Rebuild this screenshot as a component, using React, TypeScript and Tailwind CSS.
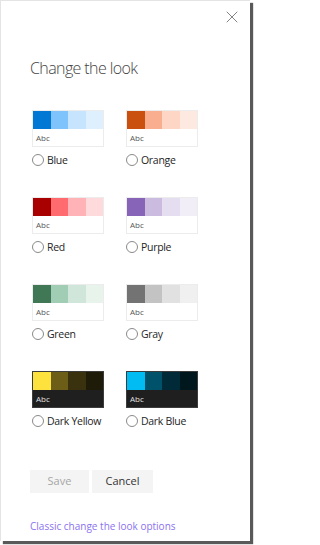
import { X } from "lucide-react";

type Theme = {
  name: string;
  colors: string[];
  dark?: boolean;
};

const themes: Theme[] = [
  { name: "Blue", colors: ["#0078d4", "#7fc3fc", "#c6e4fe", "#deeffe"] },
  { name: "Orange", colors: ["#ca5010", "#f9ae8f", "#fdd6c6", "#fee9e0"] },
  { name: "Red", colors: ["#a80000", "#ff6b6f", "#ffb3b6", "#ffdadc"] },
  { name: "Purple", colors: ["#8764b8", "#cbbbdf", "#e5def0", "#f2eef7"] },
  { name: "Green", colors: ["#407855", "#a0cdb3", "#d0e6da", "#e8f3ec"] },
  { name: "Gray", colors: ["#737373", "#c3c3c3", "#e1e1e1", "#f0f0f0"] },
  { name: "Dark Yellow", colors: ["#fde23e", "#6c5d17", "#3a320f", "#1e1b09"], dark: true },
  { name: "Dark Blue", colors: ["#00bcf2", "#00526b", "#002a37", "#00171e"], dark: true },
];

function Swatch(props: { theme: Theme }) {
  const { theme } = props;
  return (
    <div
      className={
        theme.dark
          ? "flex w-[72px] flex-col border border-[#3c3c3c] bg-[#1f1f1f]"
          : "flex w-[72px] flex-col border border-[#ececec] bg-white"
      }
    >
      <div className="flex h-[18px]">
        {theme.colors.map((c, i) => (
          <span key={i} className="h-full flex-1" style={{ backgroundColor: c }} />
        ))}
      </div>
      <div
        className={
          theme.dark
            ? "flex h-[17px] items-center pl-[3px] text-[8px] text-[#e0e0e0]"
            : "flex h-[17px] items-center pl-[3px] text-[8px] text-[#555555]"
        }
      >
        Abc
      </div>
    </div>
  );
}

function ThemeOption(props: { theme: Theme }) {
  return (
    <div className="flex flex-col gap-[7px]">
      <Swatch theme={props.theme} />
      <label className="flex h-[12px] items-center gap-[3px] whitespace-nowrap">
        <span className="size-[12px] shrink-0 rounded-full border border-[#8a8a8a] bg-white" />
        <span className="text-[10.5px] leading-none tracking-[-0.3px] text-[#252525]">
          {props.theme.name}
        </span>
      </label>
    </div>
  );
}

export default function App() {
  return (
    <div
      className="h-[545px] w-[254px] bg-white"
      style={{ fontFamily: '"Open Sans", "Noto Sans", sans-serif' }}
    >
      <div className="flex h-[541px] w-[250px] flex-col border-l border-t border-[#e4e4e4] bg-white shadow-[3px_3px_1px_rgba(0,0,0,0.65)]">
        <div className="flex justify-end pr-[8px] pt-[6px]">
          <button className="flex size-[20px] items-center justify-center text-[#6b6b6b]" aria-label="Close">
            <X className="size-[20px]" strokeWidth={1} />
          </button>
        </div>
        <h1 className="ml-[29px] mt-[29px] text-[16px] font-light leading-[24px] tracking-[-0.6px] text-[#444444]">
          Change the look
        </h1>
        <div className="ml-[31px] mt-[30px] grid w-[166px] grid-cols-[72px_72px] gap-x-[22px] gap-y-[31px]">
          {themes.map((t) => (
            <ThemeOption key={t.name} theme={t} />
          ))}
        </div>
        <div className="ml-[29px] mt-[43px] flex gap-[3px]">
          <button className="h-[23px] w-[59px] bg-[#f4f4f4] text-[11px] text-[#a6a6a6]">Save</button>
          <button className="h-[23px] w-[61px] bg-[#f4f4f4] text-[11px] font-medium text-[#333333]">
            Cancel
          </button>
        </div>
        <a className="ml-[29px] mt-[26px] text-[10px] text-[#8a72f0]" href="#">
          Classic change the look options
        </a>
      </div>
    </div>
  );
}
